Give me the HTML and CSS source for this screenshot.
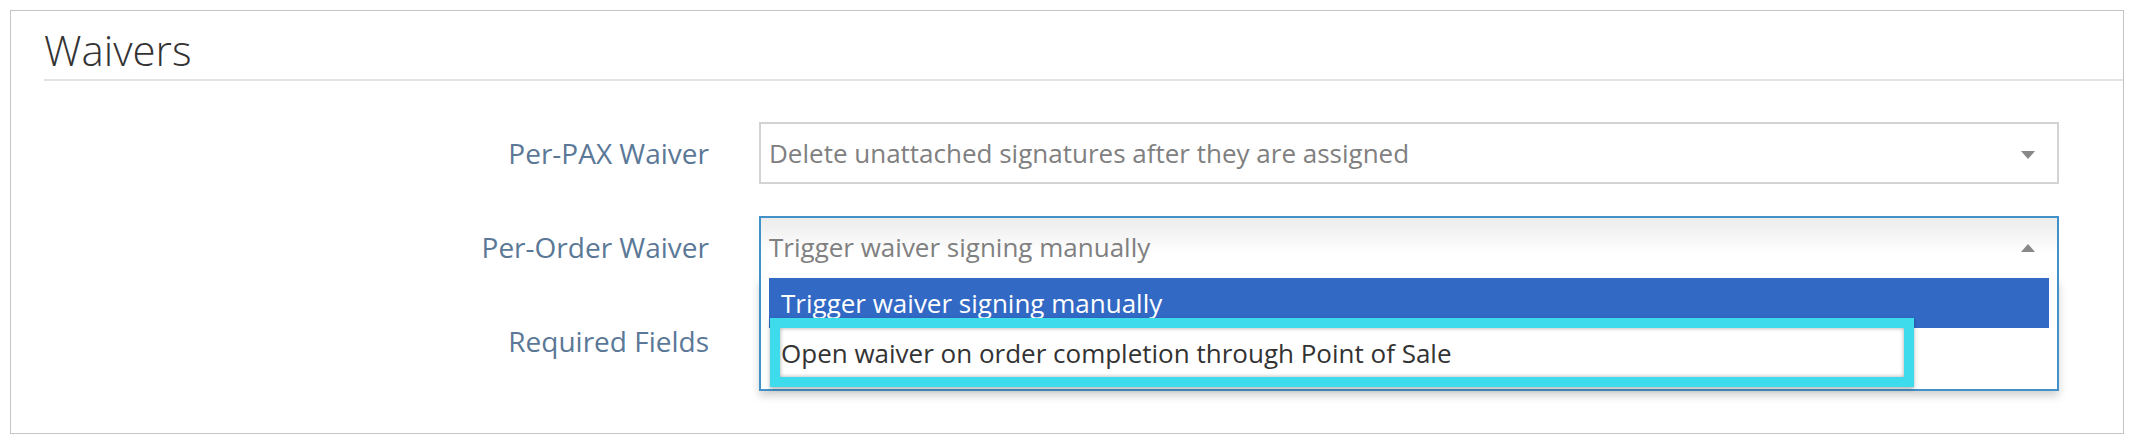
FILE: index.html
```html
<!DOCTYPE html>
<html lang="en">
<head>
<meta charset="utf-8">
<title>Waivers</title>
<link rel="stylesheet" href="styles.css">
</head>
<body>
<section class="panel">
  <h2 class="panel-title">Waivers</h2>
  <div class="form">
    <label class="form-label">Per-PAX Waiver</label>
    <div class="select">
      <span class="select-value">Delete unattached signatures after they are assigned</span>
      <span class="arrow arrow-down"></span>
    </div>

    <label class="form-label">Per-Order Waiver</label>
    <div class="select-wrap">
      <div class="select select-open">
        <span class="select-value">Trigger waiver signing manually</span>
        <span class="arrow arrow-up"></span>
      </div>
      <ul class="dropdown">
        <li class="option option-active">Trigger waiver signing manually</li>
        <li class="option">Open waiver on order completion through Point of Sale<span class="callout"></span></li>
      </ul>
    </div>

    <label class="form-label">Required Fields</label>
    <div class="select select-empty"></div>
  </div>
</section>
</body>
</html>
```

FILE: styles.css
```css
* { box-sizing: border-box; }

body {
  margin: 10px;
  background: #ffffff;
  font-family: "Open Sans", "Liberation Sans", sans-serif;
}

.panel {
  width: 2114px;
  height: 424px;
  background: #ffffff;
  box-shadow: 0 1px 6px rgba(0, 0, 0, 0.5);
  border: 1px solid #c4c4c4;
}

.panel-title {
  margin: 0 0 0 33px;
  padding: 11px 0 1px 0;
  font-size: 42px;
  font-weight: 300;
  line-height: 56px;
  color: #333333;
  border-bottom: 2px solid #e3e3e3;
}

.form {
  display: grid;
  grid-template-columns: 698px 1300px;
  grid-auto-rows: 62px;
  column-gap: 50px;
  row-gap: 32px;
  padding-top: 41px;
}

.form-label {
  text-align: right;
  font-size: 28px;
  line-height: 62px;
  color: #5b7897;
}

.select-wrap {
  position: relative;
}

.select {
  position: relative;
  height: 62px;
  border: 2px solid #d3d3d3;
  background: #ffffff;
  padding: 0 60px 0 8px;
  font-size: 26px;
  line-height: 58px;
  color: #808080;
  white-space: nowrap;
}

.select-open {
  border-color: #4391c9;
  border-bottom: none;
  background: linear-gradient(#ececec 0%, #ffffff 60%);
}

.arrow {
  position: absolute;
  right: 22px;
  width: 0;
  height: 0;
  border-left: 7.5px solid transparent;
  border-right: 7.5px solid transparent;
}

.arrow-down {
  top: 27px;
  border-top: 8px solid #888888;
}

.arrow-up {
  top: 26px;
  border-bottom: 8px solid #888888;
}

.dropdown {
  position: absolute;
  z-index: 2;
  top: 62px;
  left: 0;
  right: 0;
  margin: 0;
  padding: 0 8px 11px 8px;
  list-style: none;
  background: #ffffff;
  border: 2px solid #4391c9;
  border-top: none;
  box-shadow: 0 5px 8px rgba(0, 0, 0, 0.18);
}

.option {
  position: relative;
  height: 50px;
  padding: 0 12px;
  font-size: 26px;
  line-height: 50px;
  color: #333333;
  white-space: nowrap;
}

.option-active {
  background: #3169c5;
  color: #ffffff;
}

.callout {
  position: absolute;
  top: -10px;
  left: 1px;
  width: 1144px;
  height: 69px;
  border: 10px solid #3ddbeb;
  box-shadow: 0 2px 4px rgba(0, 0, 0, 0.3), inset 0 0 4px rgba(0, 0, 0, 0.35);
}

.select-empty {
  border-color: #d3d3d3;
}
```
